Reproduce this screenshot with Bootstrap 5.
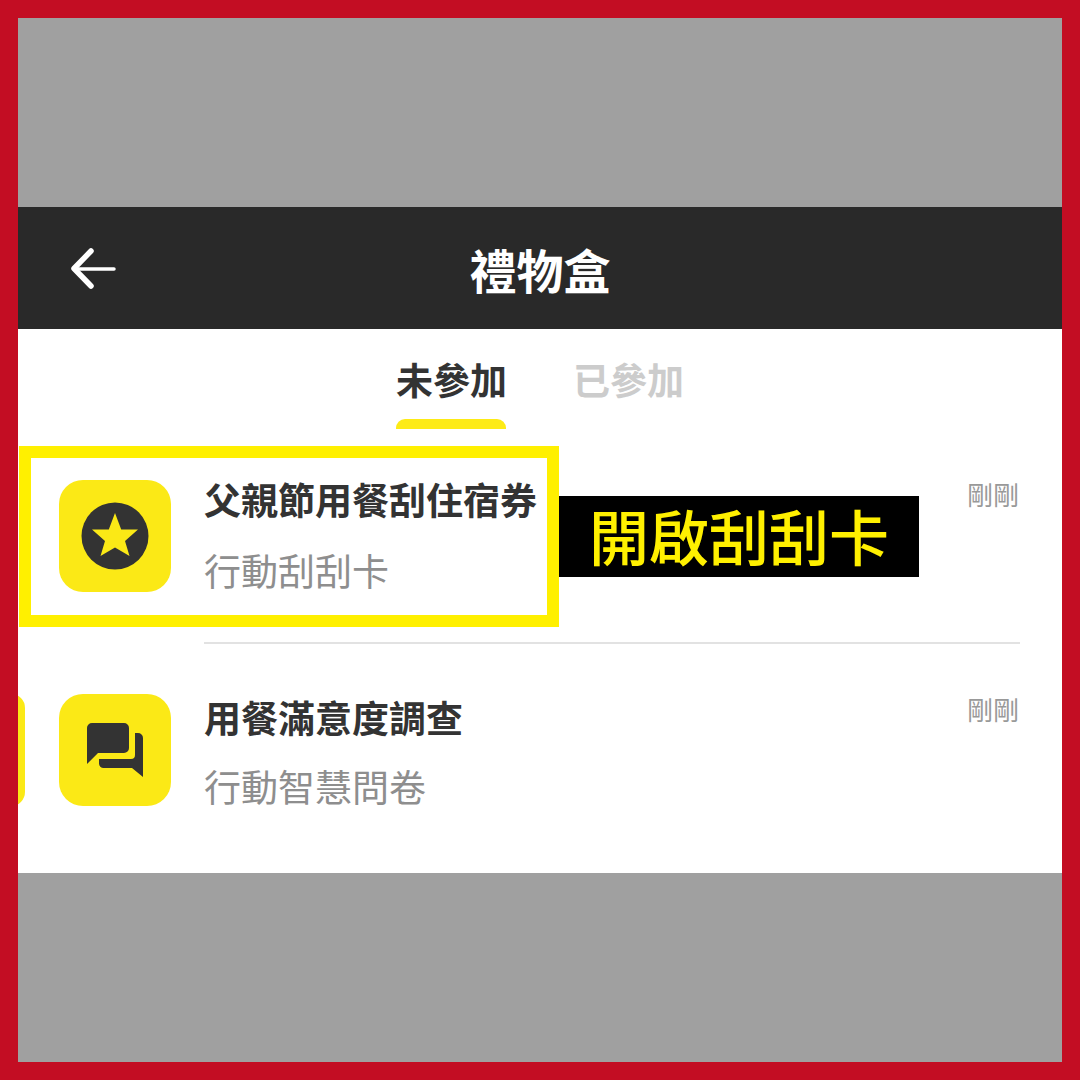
<!doctype html>
<html lang="zh-Hant">
<head>
<meta charset="utf-8">
<title>禮物盒</title>
<link href="https://cdn.jsdelivr.net/npm/bootstrap@5.3.0/dist/css/bootstrap.min.css" rel="stylesheet">
<style>
html,body{margin:0;height:1080px;overflow:hidden}
body{font-family:"Noto Sans CJK TC","Noto Sans",sans-serif}
.frame{width:1080px;height:1080px;border:18px solid #c30d23;background:#a0a0a0;position:relative;overflow:hidden}
.gap-band{height:189px}
.top-bar{height:122px;background:#292929;color:#fff}
.back-ico{left:52px;top:36px;width:48px;height:48px}
.top-title{font-size:47px;font-weight:700;line-height:1}
.sheet{height:544px;background:#fff;position:relative;overflow:hidden}
.tabs{height:117px;padding-top:29px;gap:67px;padding-right:1px}
.tab-item{width:110px;text-align:center;font-size:37px;font-weight:700;line-height:42px;color:#333;white-space:nowrap;position:relative}
.tab-off{color:#ccc}
.tab-mark{left:0;top:61px;width:110px;height:10px;background:#fdeb16;border-radius:9px 9px 0 0}
.gift-row{padding-left:41px;padding-right:42px;gap:33px}
.gift-ico{width:112px;height:112px;border-radius:24px;background:#fbe916;flex:none;margin-top:34px}
.gift-body{flex:1;padding-top:31px;position:relative}
.gift-title{font-size:37px;font-weight:700;line-height:44px;color:#333;white-space:nowrap}
.gift-sub{font-size:37px;line-height:44px;color:#8e8e8e;white-space:nowrap}
.gift-time{right:1px;font-size:26px;line-height:30px;color:#999;white-space:nowrap}
.row-one{height:198px}
.row-one .gift-body{border-bottom:2px solid #e2e2e2}
.row-one .gift-sub{margin-top:27px}
.row-one .gift-time{top:33px}
.row-two .gift-ico{margin-top:50px}
.row-two .gift-body{padding-top:51px}
.row-two .gift-sub{margin-top:25px}
.row-two .gift-time{top:50px}
.peek-card{left:-90px;top:676px;width:97px;height:112px;background:#fbe916;border-radius:14px}
.hi-box{left:1px;top:428px;width:540px;height:181px;border:12px solid #fff000}
.hi-label{left:541px;top:478px;width:360px;height:81px;background:#000;color:#fff000;font-size:60px;font-weight:500;line-height:77px;text-align:center;white-space:nowrap}
</style>
</head>
<body>
<div class="frame">
  <div class="gap-band"></div>
  <div class="top-bar d-flex align-items-center justify-content-center position-relative">
    <svg class="back-ico position-absolute" viewBox="0 0 48 48" fill="none" stroke="#fff" stroke-linecap="round" stroke-linejoin="round" aria-hidden="true">
      <path d="M21 8 4 25.500 21 43" stroke-width="5.500"/>
      <path d="M6 26H44" stroke-width="3.500"/>
    </svg>
    <div class="top-title">禮物盒</div>
  </div>
  <div class="sheet">
    <div class="tabs d-flex justify-content-center">
      <div class="tab-item">未參加<div class="tab-mark position-absolute"></div></div>
      <div class="tab-item tab-off">已參加</div>
    </div>
    <div class="gift-row row-one d-flex">
      <div class="gift-ico d-flex align-items-center justify-content-center">
        <svg width="68" height="68" viewBox="0 0 68 68" aria-hidden="true">
          <circle cx="34" cy="34" r="33.500" fill="#333"/>
          <path d="M34 11 40.200 27.500 57 27.500 44 39 48.500 54 34 45.500 19.500 54 24 39 11 27.500 27.800 27.500Z" fill="#fbe916"/>
        </svg>
      </div>
      <div class="gift-body">
        <div class="gift-title">父親節用餐刮住宿券</div>
        <div class="gift-sub">行動刮刮卡</div>
        <div class="gift-time position-absolute">剛剛</div>
      </div>
    </div>
    <div class="gift-row row-two d-flex">
      <div class="gift-ico d-flex align-items-center justify-content-center">
        <svg width="60" height="58" viewBox="0 0 60 58" aria-hidden="true">
          <path d="M7 2H39A5 5 0 0 1 44 7V27A5 5 0 0 1 39 32H13L2 43V7A5 5 0 0 1 7 2Z" fill="#333"/>
          <path d="M50 12H53A5 5 0 0 1 58 17V56L47 47H18.500A4.500 4.500 0 0 1 14 42.500V38H46A4 4 0 0 0 50 34Z" fill="#333"/>
        </svg>
      </div>
      <div class="gift-body">
        <div class="gift-title">用餐滿意度調查</div>
        <div class="gift-sub">行動智慧問卷</div>
        <div class="gift-time position-absolute">剛剛</div>
      </div>
    </div>
  </div>
  <div class="gap-band"></div>
  <div class="peek-card position-absolute"></div>
  <div class="hi-box position-absolute"></div>
  <div class="hi-label position-absolute">開啟刮刮卡</div>
</div>
</body>
</html>
